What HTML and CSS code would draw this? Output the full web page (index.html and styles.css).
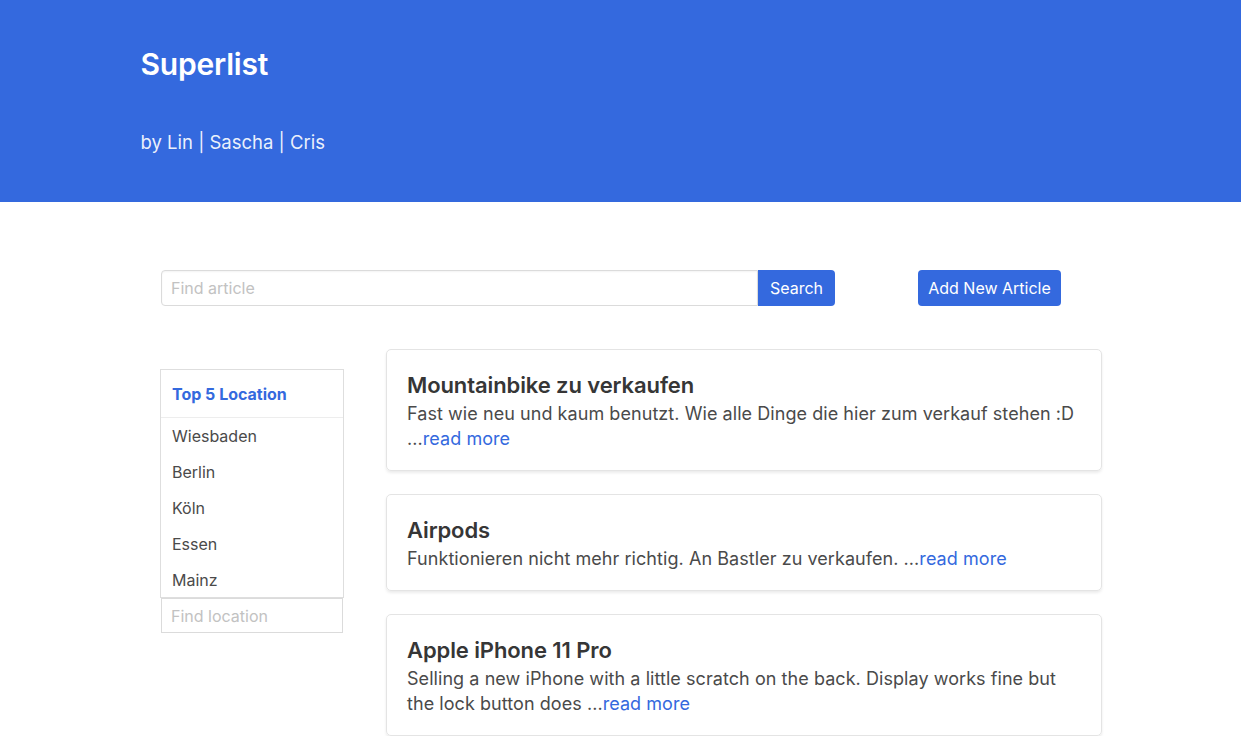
FILE: index.html
```html
<!DOCTYPE html>
<html lang="de">
<head>
<meta charset="utf-8">
<title>Superlist</title>
<link rel="stylesheet" href="styles.css">
</head>
<body>
<header class="hero">
  <div class="container">
    <h1 class="title">Superlist</h1>
    <p class="subtitle">by Lin | Sascha | Cris</p>
  </div>
</header>
<main class="main">
  <div class="toolbar">
    <div class="search-group">
      <input class="input search-input" type="text" placeholder="Find article">
      <button class="btn btn-search">Search</button>
    </div>
    <button class="btn btn-add">Add New Article</button>
  </div>
  <div class="columns">
    <aside class="sidebar">
      <nav class="panel">
        <p class="panel-heading">Top 5 Location</p>
        <a class="panel-block">Wiesbaden</a>
        <a class="panel-block">Berlin</a>
        <a class="panel-block">Köln</a>
        <a class="panel-block">Essen</a>
        <a class="panel-block">Mainz</a>
      </nav>
      <input class="input location-input" type="text" placeholder="Find location">
    </aside>
    <section class="articles">
      <article class="box">
        <h2 class="box-title">Mountainbike zu verkaufen</h2>
        <p class="box-text">Fast wie neu und kaum benutzt. Wie alle Dinge die hier zum verkauf stehen :D ...<a class="more">read more</a></p>
      </article>
      <article class="box">
        <h2 class="box-title">Airpods</h2>
        <p class="box-text">Funktionieren nicht mehr richtig. An Bastler zu verkaufen. ...<a class="more">read more</a></p>
      </article>
      <article class="box">
        <h2 class="box-title">Apple iPhone 11 Pro</h2>
        <p class="box-text">Selling a new iPhone with a little scratch on the back. Display works fine but the lock button does ...<a class="more">read more</a></p>
      </article>
    </section>
  </div>
</main>
</body>
</html>
```
FILE: styles.css
```css
* { box-sizing: border-box; }
html, body { margin: 0; padding: 0; }
body {
  font-family: Inter, "Noto Sans", "Liberation Sans", sans-serif;
  color: #4a4a4a;
  background: #fff;
  font-size: 16px;
}
.hero {
  background: #3469de;
  height: 202px;
  color: #fff;
}
.container {
  width: 960px;
  margin: 0 auto;
  padding-top: 44px;
}
.title {
  margin: 0;
  font-size: 30px;
  font-weight: 600;
  line-height: 40px;
  letter-spacing: -0.2px;
}
.subtitle {
  margin: 38px 0 0;
  font-size: 18.5px;
  line-height: 40px;
  color: rgba(255,255,255,0.92);
}
.main {
  width: 942px;
  margin-left: 160px;
  padding-top: 68px;
}
.toolbar {
  display: flex;
  align-items: center;
  height: 36px;
}
.search-group {
  display: flex;
  margin-left: 1px;
  width: 674px;
}
.input {
  font-family: inherit;
  font-size: 16px;
  height: 36px;
  border: 1px solid #dbdbdb;
  border-radius: 4px;
  padding: 0 9px;
  color: #363636;
  box-shadow: inset 0 1px 2px rgba(10,10,10,0.05);
  outline: none;
}
.input::placeholder { color: #c2c2c2; }
.search-input {
  flex: 1;
  border-radius: 4px 0 0 4px;
}
.btn {
  font-family: inherit;
  font-size: 16px;
  height: 36px;
  border: none;
  background: #3469de;
  color: #fff;
  border-radius: 4px;
  padding: 0 10px;
  white-space: nowrap;
  cursor: pointer;
}
.btn-search {
  width: 77px;
  border-radius: 0 4px 4px 0;
}
.btn-add {
  margin-left: 83px;
  width: 143px;
}
.columns {
  display: flex;
  align-items: flex-start;
  margin-top: 43px;
}
.sidebar {
  width: 184px;
  margin-top: 20px;
  display: flex;
  flex-direction: column;
}
.panel {
  border: 1px solid #dedede;
}
.panel-heading {
  margin: 0;
  height: 48px;
  line-height: 48px;
  padding: 0 11px;
  color: #3469de;
  font-weight: 700;
  font-size: 16px;
  border-bottom: 1px solid #ededed;
}
.panel-block {
  display: block;
  height: 36px;
  line-height: 36px;
  padding: 0 11px;
  color: #4a4a4a;
  font-size: 16px;
}
.panel-block:last-child { height: 35px; }
.location-input {
  margin: 0 1px;
  width: 182px;
  height: 35px;
  border-radius: 0;
  box-shadow: none;
}
.articles {
  margin-left: 42px;
  width: 716px;
  display: flex;
  flex-direction: column;
  gap: 23px;
}
.box {
  border: 1px solid #e4e4e4;
  border-radius: 5px;
  padding: 20px 20px 19px;
  box-shadow: 0 2px 3px rgba(10,10,10,0.08);
}
.box-title {
  margin: 0;
  font-size: 22px;
  line-height: 30px;
  font-weight: 600;
  color: #363636;
  letter-spacing: -0.1px;
}
.box-text {
  margin: 0;
  padding-top: 1px;
  font-size: 18px;
  line-height: 25px;
  letter-spacing: 0.06px;
  color: #4a4a4a;
}
.more {
  color: #3469de;
  text-decoration: none;
}
```
